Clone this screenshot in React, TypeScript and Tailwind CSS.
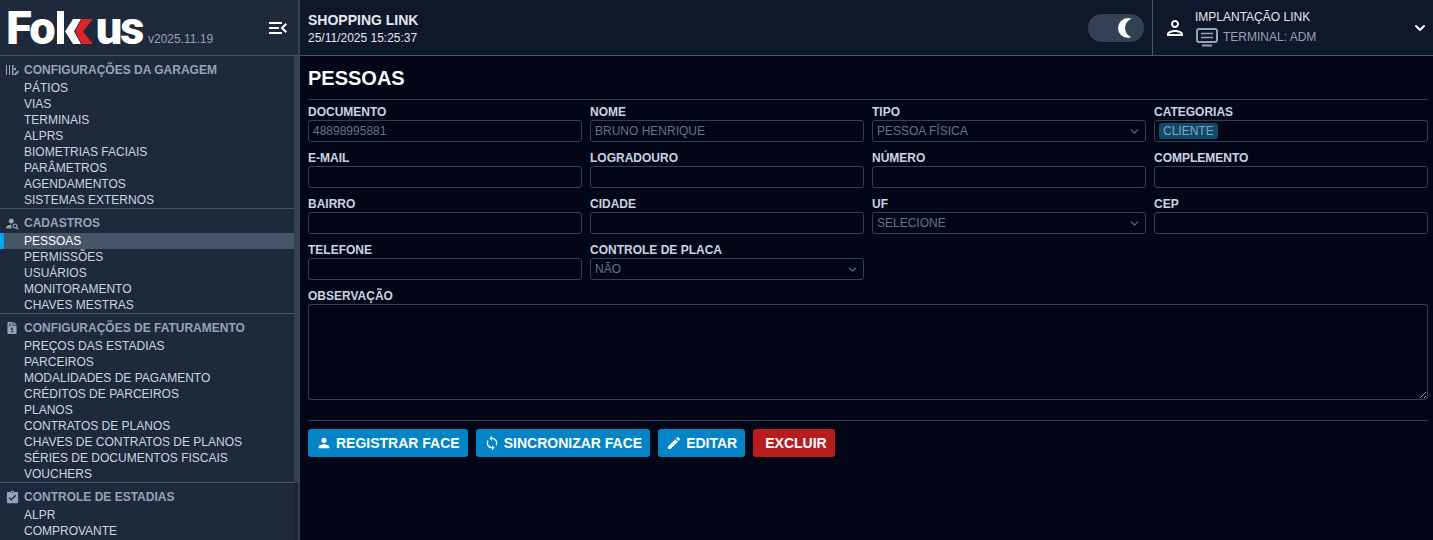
import { FaFileInvoiceDollar } from "react-icons/fa";
import {
  MdAssignmentTurnedIn,
  MdEdit,
  MdMenuOpen,
  MdOutlinePerson,
  MdPerson,
  MdPersonSearch,
  MdSync,
} from "react-icons/md";
import { ChevronDown } from "lucide-react";
import type { ReactNode } from "react";

function GarageIcon() {
  return (
    <svg viewBox="0 0 13 10" className="h-[10px] w-[13px]" fill="currentColor">
      <rect x="0" y="0" width="1" height="10" />
      <rect x="3" y="0" width="1" height="10" />
      <rect x="6" y="0" width="1.5" height="10" />
      <path d="M7.5 9.5 12.5 5v2.5L10 10H7.5z" />
      <path d="M8 3h2v2H8z" />
    </svg>
  );
}

function TerminalIcon() {
  return (
    <svg viewBox="0 0 22 20" className="ml-[1px] h-[20px] w-[22px] text-[#94a3b8]" fill="none" stroke="currentColor" strokeWidth="2">
      <rect x="1" y="2" width="20" height="13" rx="2" />
      <path d="M5 6.5h12M5 10.5h12" strokeWidth="1.6" />
      <path d="M6 18.5h10" />
    </svg>
  );
}

const sections: { title: string; icon: ReactNode; items: string[] }[] = [
  {
    title: "CONFIGURAÇÕES DA GARAGEM",
    icon: <GarageIcon />,
    items: ["PÁTIOS", "VIAS", "TERMINAIS", "ALPRS", "BIOMETRIAS FACIAIS", "PARÂMETROS", "AGENDAMENTOS", "SISTEMAS EXTERNOS"],
  },
  {
    title: "CADASTROS",
    icon: <MdPersonSearch className="size-[15px]" />,
    items: ["PESSOAS", "PERMISSÕES", "USUÁRIOS", "MONITORAMENTO", "CHAVES MESTRAS"],
  },
  {
    title: "CONFIGURAÇÕES DE FATURAMENTO",
    icon: <FaFileInvoiceDollar className="size-[12px]" />,
    items: [
      "PREÇOS DAS ESTADIAS",
      "PARCEIROS",
      "MODALIDADES DE PAGAMENTO",
      "CRÉDITOS DE PARCEIROS",
      "PLANOS",
      "CONTRATOS DE PLANOS",
      "CHAVES DE CONTRATOS DE PLANOS",
      "SÉRIES DE DOCUMENTOS FISCAIS",
      "VOUCHERS",
    ],
  },
  {
    title: "CONTROLE DE ESTADIAS",
    icon: <MdAssignmentTurnedIn className="size-[15px]" />,
    items: ["ALPR", "COMPROVANTE"],
  },
];

function Logo() {
  return (
    <div className="flex w-[137px] shrink-0 items-center font-['Roboto',sans-serif] text-[47px] leading-[44px] font-black tracking-[-2px] text-white">
      <span>Fo</span>
      <span className="mb-[1px] ml-[3px] h-[33px] w-[7px] shrink-0 bg-white" />
      <svg viewBox="0 0 29 25" className="mt-[7px] ml-[1px] h-[25px] w-[29px] shrink-0">
        <path d="M8 0h8L9 12.5 16 25H8L0 12.5z" fill="#ffffff" />
        <path d="M17 0h11L18 12.5 28 25H17L10 12.5z" fill="#dc2626" />
      </svg>
      <span className="ml-[2px]">us</span>
    </div>
  );
}

function Sidebar() {
  return (
    <aside className="flex w-[300px] shrink-0 flex-col border-r-2 border-[#334155] bg-[#1e293b]">
      <div className="flex h-[56px] shrink-0 items-center border-b border-[#475569] pr-[8px] pl-[6px]">
        <Logo />
        <span className="mt-[23px] ml-[5px] text-xs text-[#94a3b8]">v2025.11.19</span>
        <MdMenuOpen className="ml-auto size-[24px] text-white" />
      </div>
      <div className="flex min-h-0 flex-1">
        <nav className="min-w-0 flex-1 overflow-hidden">
          {sections.map((section) => (
            <div key={section.title} className="border-b border-[#475569] last:border-b-0">
              <div className="flex h-[24px] items-center pt-[4px] text-xs font-bold text-[#94a3b8]">
                <span className="flex w-[24px] justify-center pr-[2px] pl-[2px]">{section.icon}</span>
                {section.title}
              </div>
              {section.items.map((item) => (
                <div
                  key={item}
                  className={
                    item === "PESSOAS"
                      ? "h-[16px] border-l-4 border-sky-500 bg-[#475569] pl-[20px] text-xs leading-4 text-white"
                      : "h-[16px] pl-[24px] text-xs leading-4 text-[#cbd5e1]"
                  }
                >
                  {item}
                </div>
              ))}
            </div>
          ))}
        </nav>
        <div className="h-full w-[4px] shrink-0 bg-[#1a2433]">
          <div className="h-[427px] bg-[#334155]" />
        </div>
      </div>
    </aside>
  );
}

function Field({ label, value, select, children }: { label: string; value?: string; select?: boolean; children?: ReactNode }) {
  return (
    <div>
      <div className="h-[16px] text-xs leading-4 font-bold text-[#cbd5e1]">{label}</div>
      <div className="flex h-[22px] items-center justify-between rounded-[3px] border border-[#334155] pr-[4px] pl-[4px] text-xs text-[#64748b]">
        {children ?? <span>{value}</span>}
        {select && <ChevronDown className="size-[13px] text-[#64748b]" />}
      </div>
    </div>
  );
}

function ActionButton({ icon, label, danger }: { icon?: ReactNode; label: string; danger?: boolean }) {
  return (
    <button
      className={
        danger
          ? "flex h-[28px] items-center rounded-[3px] bg-[#b91c1c] pr-[8px] pl-[12px] text-sm font-bold text-white"
          : "flex h-[28px] items-center gap-[4px] rounded-[3px] bg-[#0284c7] px-[8px] text-sm font-bold text-white"
      }
    >
      {icon}
      {label}
    </button>
  );
}

export default function App() {
  return (
    <div className="flex h-[540px] w-[1433px] overflow-hidden bg-[#020617] font-['Liberation_Sans',sans-serif]">
      <Sidebar />
      <div className="flex min-w-0 flex-1 flex-col">
        <header className="flex h-[56px] shrink-0 items-center border-b border-[#475569] bg-[#0f172a]">
          <div className="flex-1 pl-[8px]">
            <div className="text-sm leading-5 font-bold text-[#e2e8f0]">SHOPPING LINK</div>
            <div className="text-xs leading-4 text-[#e2e8f0]">25/11/2025 15:25:37</div>
          </div>
          <div className="relative mr-[8px] h-[28px] w-[56px] rounded-full bg-[#334155]">
            <div className="absolute top-[4px] left-[30px] size-[20px] rounded-full shadow-[inset_7px_0_0_0_#f8fafc]" />
          </div>
          <div className="flex h-full w-[281px] items-center border-l border-[#475569]">
            <MdOutlinePerson className="ml-[10px] size-[24px] text-white" />
            <div className="ml-[8px] flex-1">
              <div className="mt-[2px] text-xs leading-4 text-[#e2e8f0]">IMPLANTAÇÃO LINK</div>
              <div className="flex h-[24px] items-center gap-[5px] text-xs text-[#94a3b8]">
                <TerminalIcon />
                TERMINAL: ADM
              </div>
            </div>
            <ChevronDown strokeWidth={3} className="mr-[5px] size-[16px] text-white" />
          </div>
        </header>
        <main className="min-h-0 flex-1 pr-[5px] pl-[8px]">
          <h1 className="flex h-[44px] items-center border-b border-[#334155] text-xl font-bold text-[#f8fafc]">PESSOAS</h1>
          <div className="mt-[4px] grid grid-cols-4 gap-x-[8px] gap-y-[8px]">
            <Field label="DOCUMENTO" value="48898995881" />
            <Field label="NOME" value="BRUNO HENRIQUE" />
            <Field label="TIPO" value="PESSOA FÍSICA" select />
            <Field label="CATEGORIAS">
              <span className="rounded-[3px] bg-[#0c4a6e] px-[4px] text-xs leading-4 text-[#94a3b8]">CLIENTE</span>
            </Field>
            <Field label="E-MAIL" />
            <Field label="LOGRADOURO" />
            <Field label="NÚMERO" />
            <Field label="COMPLEMENTO" />
            <Field label="BAIRRO" />
            <Field label="CIDADE" />
            <Field label="UF" value="SELECIONE" select />
            <Field label="CEP" />
            <Field label="TELEFONE" />
            <Field label="CONTROLE DE PLACA" value="NÃO" select />
          </div>
          <div className="mt-[8px]">
            <div className="h-[16px] text-xs leading-4 font-bold text-[#cbd5e1]">OBSERVAÇÃO</div>
            <textarea className="block h-[96px] w-full rounded-[3px] border border-[#334155]" />
          </div>
          <div className="mt-[20px] flex gap-[8px] border-t border-[#334155] pt-[8px]">
            <ActionButton icon={<MdPerson className="size-[16px]" />} label="REGISTRAR FACE" />
            <ActionButton icon={<MdSync className="size-[16px]" />} label="SINCRONIZAR FACE" />
            <ActionButton icon={<MdEdit className="size-[16px]" />} label="EDITAR" />
            <ActionButton label="EXCLUIR" danger />
          </div>
        </main>
      </div>
    </div>
  );
}
